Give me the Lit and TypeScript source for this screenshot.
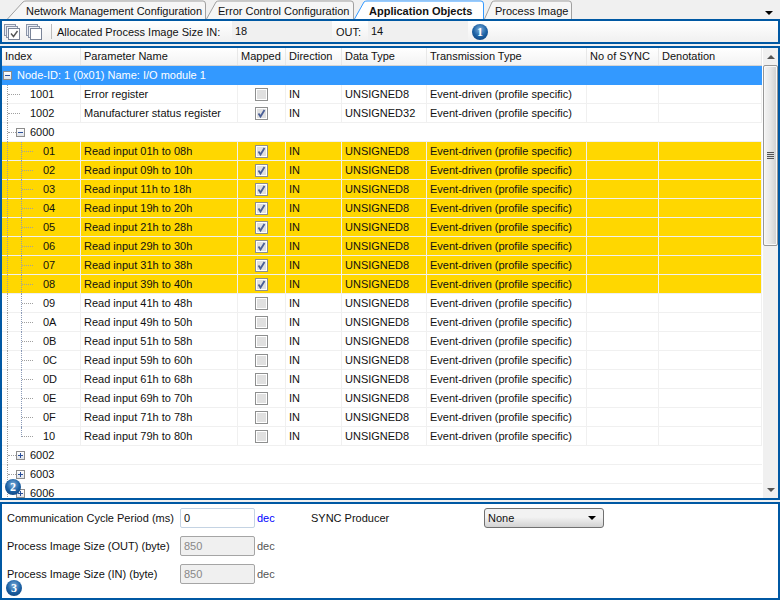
import { LitElement, html, css, svg, nothing } from 'lit';
import { customElement } from 'lit/decorators.js';

const tabs = [
  { label: 'Network Management Configuration', width: 200, slant: 16, pad: 19 },
  { label: 'Error Control Configuration', width: 149, slant: 10, pad: 12 },
  { label: 'Application Objects', width: 131, slant: 10, pad: 15, active: true },
  { label: 'Process Image', width: 89, slant: 8, pad: 11 },
];

const hex = (n: number) => n.toString(16).toUpperCase().padStart(2, '0');

const subRows = Array.from({ length: 16 }, (_, i) => ({
  index: hex(i + 1),
  name: `Read input ${hex(i * 8 + 1)}h to ${hex(i * 8 + 8)}h`,
  mapped: i < 8,
  last: i === 15,
}));

const checkbox = (on: boolean) => html`
  <svg class="check" width="13" height="13" viewBox="0 0 13 13">
    <rect x=".5" y=".5" width="12" height="12" fill="#fff" stroke="#8e8f8f" />
    <rect x="2" y="2" width="9" height="9" fill="#e0e0e0" />
    ${on ? svg`<path d="M3.5 6.5 L5.5 9.5 L9.5 3" fill="none" stroke="#4a5f97" stroke-width="1.8" />` : nothing}
  </svg>
`;

const stack = (on: boolean) => html`
  <svg width="16" height="16" viewBox="0 0 16 16">
    <rect x=".5" y=".5" width="11" height="11" fill="#e8ecf4" stroke="#8a94a8" />
    <rect x="2.5" y="2.5" width="11" height="11" fill="#eef1f6" stroke="#8a94a8" />
    <rect x="4.5" y="4.5" width="11" height="11" fill="#fff" stroke="#7a8498" />
    ${on ? svg`<path d="M7 9.5 L9.5 12.5 L13.5 7" fill="none" stroke="#555" stroke-width="1.4" />` : nothing}
  </svg>
`;

@customElement('app-root')
export class AppRoot extends LitElement {
  static styles = css`
    :host {
      display: flex;
      flex-direction: column;
      width: 780px;
      height: 600px;
      overflow: hidden;
      background: #f0f0f0;
      font-family: 'Liberation Sans', Arial, sans-serif;
      font-size: 11px;
      color: #111;
    }

    .tabs {
      display: flex;
      align-items: flex-end;
      height: 19px;
      padding-left: 7px;
      flex: none;
    }
    .tab {
      position: relative;
      height: 19px;
      line-height: 22px;
      white-space: nowrap;
      box-sizing: border-box;
      margin-right: -1px;
    }
    .tab svg {
      position: absolute;
      left: 0;
      top: 0;
    }
    .tab span {
      position: relative;
    }
    .tab.active {
      font-weight: bold;
    }
    .more {
      margin-left: auto;
      margin-right: 7px;
      margin-bottom: 4px;
      border-left: 4px solid transparent;
      border-right: 4px solid transparent;
      border-top: 4px solid #000;
    }

    .toolbar {
      display: flex;
      align-items: center;
      height: 25px;
      box-sizing: border-box;
      flex: none;
      border: 2px solid #0058a3;
      background: linear-gradient(#fff, #f0f0f0);
      padding-left: 2px;
    }
    .toolbar svg {
      flex: none;
    }
    .toolbar .second {
      margin-left: 6px;
      height: 16px;
    }
    .sep {
      width: 1px;
      height: 15px;
      background: #bbb;
      margin: 0 5px 0 9px;
    }
    .value {
      width: 100px;
      height: 21px;
      line-height: 21px;
      background: #f0f0f0;
      padding-left: 3px;
      box-sizing: border-box;
    }
    .alloc {
      width: 175px;
      white-space: nowrap;
    }
    .out {
      width: 36px;
      padding-left: 4px;
      box-sizing: border-box;
    }

    .badge {
      width: 16px;
      height: 16px;
      border-radius: 50%;
      flex: none;
      background: radial-gradient(circle at 50% 35%, #7fb0dc, #1d62a5 50%, #0b3a72);
      color: #fff;
      font-weight: bold;
      font-size: 12px;
      line-height: 16px;
      text-align: center;
      font-family: 'Liberation Serif', serif;
    }
    .toolbar .badge {
      margin-left: 4px;
    }

    .grid {
      position: relative;
      margin-top: 2px;
      height: 454px;
      flex: none;
      box-sizing: border-box;
      border: 2px solid #0058a3;
      background: #fff;
      display: flex;
      overflow: hidden;
    }
    .table {
      width: 761px;
      flex: none;
      height: 450px;
      overflow: hidden;
    }
    .row {
      display: grid;
      grid-template-columns: 79px 157px 48px 56px 85px 160px 72px 103px;
      width: 760px;
      height: 19px;
      box-sizing: border-box;
      border-bottom: 1px solid #f0f0f0;
      line-height: 18px;
      white-space: nowrap;
    }
    .row > div {
      border-right: 1px solid #f0f0f0;
      padding-left: 3px;
      box-sizing: border-box;
      height: 18px;
    }
    .head {
      height: 18px;
      line-height: 17px;
      background: linear-gradient(#fff, #f3f3f3);
      border-bottom: 1px solid #d5d5d5;
    }
    .head > div {
      height: 17px;
      border-right: 1px solid #e8e8e8;
    }
    .hot {
      background: #ffd700;
    }
    .node {
      display: flex;
      align-items: center;
      gap: 5px;
      height: 19px;
      width: 760px;
      padding: 0 0 1px 1px;
      box-sizing: border-box;
      background: #3399ff;
      color: #fff;
    }
    .group {
      display: flex;
      width: 760px;
      height: 19px;
      box-sizing: border-box;
      border-bottom: 1px solid #f0f0f0;
      line-height: 18px;
    }
    .row > .index {
      display: flex;
      padding-left: 0;
    }
    .trunk {
      width: 12px;
      margin-left: 5px;
      flex: none;
      border-left: 1px dotted #a0a0a0;
      height: 19px;
    }
    .tick {
      display: block;
      height: 9px;
      border-bottom: 1px dotted #a0a0a0;
    }
    .branch {
      width: 11px;
      margin-left: 1px;
      flex: none;
      border-left: 1px dotted #8a9ab8;
      height: 19px;
    }
    .branch.end {
      height: 10px;
    }
    .code {
      padding-left: 10px;
    }
    .code.top {
      padding-left: 10px;
    }
    .toggle {
      width: 9px;
      height: 9px;
      flex: none;
      position: relative;
      box-sizing: border-box;
      border: 1px solid #8c8c8c;
      background: linear-gradient(#fff, #dfe3ea);
    }
    .toggle::before {
      content: '';
      position: absolute;
      left: 1px;
      right: 1px;
      top: 3px;
      height: 1px;
      background: #2a4f9a;
    }
    .toggle.plus::after {
      content: '';
      position: absolute;
      top: 1px;
      bottom: 1px;
      left: 3px;
      width: 1px;
      background: #2a4f9a;
    }
    .group .trunk {
      width: 8px;
    }
    .group .toggle {
      margin: 5px 5px 0 0;
    }
    .mapped {
      display: flex;
      justify-content: center;
      align-items: center;
    }
    .mapped .check {
      margin-left: -3px;
    }

    .scroll {
      width: 15px;
      flex: none;
      height: 450px;
      display: flex;
      flex-direction: column;
      background: #f0f0f0;
      align-items: center;
    }
    .arrow {
      height: 17px;
      width: 15px;
      flex: none;
      display: flex;
      align-items: center;
      justify-content: center;
    }
    .arrow i {
      border-left: 4px solid transparent;
      border-right: 4px solid transparent;
    }
    .arrow.up i {
      border-bottom: 4px solid #555;
    }
    .arrow.down i {
      border-top: 4px solid #555;
    }
    .thumb {
      width: 15px;
      height: 181px;
      flex: none;
      box-sizing: border-box;
      border: 1px solid #979797;
      border-radius: 2px;
      background: linear-gradient(90deg, #f4f4f4, #e6e6e6 50%, #cfcfcf);
      display: flex;
      align-items: center;
      justify-content: center;
      box-shadow: inset 0 0 0 1px #f8f8f8;
    }
    .grip {
      width: 7px;
      height: 7px;
      background: repeating-linear-gradient(#555 0 1px, #ddd 1px 2px);
    }
    .fill {
      flex: 1;
    }
    .grid .badge {
      position: absolute;
      left: 3px;
      top: 431px;
    }

    .form {
      position: relative;
      margin-top: 2px;
      flex: 1;
      box-sizing: border-box;
      border: 2px solid #0058a3;
      background: #fff;
      padding: 4px 0 0 5px;
      display: grid;
      grid-template-columns: 173px 75px 56px 173px 120px;
      grid-auto-rows: 20px;
      row-gap: 8px;
      align-items: center;
      white-space: nowrap;
    }
    input {
      width: 75px;
      height: 20px;
      box-sizing: border-box;
      font: inherit;
      padding: 0 3px;
      border: 1px solid #c4d3e3;
      border-radius: 2px;
      outline: none;
      color: #111;
      background: #fff;
    }
    input:disabled {
      background: #f0f0f0;
      border-color: #a5a5a5;
      color: #888;
    }
    .unit {
      padding-left: 2px;
      color: #555;
    }
    .unit.live {
      color: #0000ff;
    }
    .select {
      width: 120px;
      height: 20px;
      box-sizing: border-box;
      border: 1px solid #707070;
      border-radius: 3px;
      background: linear-gradient(#f2f2f2 45%, #d2d2d2);
      display: flex;
      align-items: center;
      justify-content: space-between;
      padding: 0 7px 0 3px;
    }
    .select i {
      border-left: 4px solid transparent;
      border-right: 4px solid transparent;
      border-top: 4px solid #000;
    }
    .form .badge {
      position: absolute;
      left: 4px;
      top: 76px;
    }
  `;

  private renderTab(t: (typeof tabs)[number]) {
    const w = t.width;
    const d = `M.5 19 L${t.slant} 2 Q${t.slant + 1} 1 ${t.slant + 3} 1 H${w - 4} Q${w - 1.5} 1 ${w - 1.5} 4 V19`;
    return html`
      <div class="tab ${t.active ? 'active' : ''}" style="width:${w}px;padding-left:${t.pad}px">
        <svg width=${w} height="19" viewBox="0 0 ${w} 19">
          <path d=${d} fill=${t.active ? '#fff' : '#f6f6f6'} stroke=${t.active ? '#3399ff' : '#a0a0a0'} />
        </svg>
        <span>${t.label}</span>
      </div>
    `;
  }

  private renderCells(name: string, mapped: boolean, type: string) {
    return html`
      <div>${name}</div>
      <div class="mapped">${checkbox(mapped)}</div>
      <div>IN</div>
      <div>${type}</div>
      <div>Event-driven (profile specific)</div>
      <div></div>
      <div></div>
    `;
  }

  private renderGroup(code: string, open: boolean) {
    return html`
      <div class="group">
        <div class="trunk"><span class="tick"></span></div>
        <span class="toggle ${open ? '' : 'plus'}"></span>
        <span>${code}</span>
      </div>
    `;
  }

  render() {
    return html`
      <div class="tabs">
        ${tabs.map((t) => this.renderTab(t))}
        <div class="more"></div>
      </div>

      <div class="toolbar">
        ${stack(true)}
        <span class="second">${stack(false)}</span>
        <div class="sep"></div>
        <div class="alloc">Allocated Process Image Size IN:</div>
        <div class="value">18</div>
        <div class="out">OUT:</div>
        <div class="value">14</div>
        <div class="badge">1</div>
      </div>

      <div class="grid">
        <div class="table">
          <div class="row head">
            <div>Index</div>
            <div>Parameter Name</div>
            <div>Mapped</div>
            <div>Direction</div>
            <div>Data Type</div>
            <div>Transmission Type</div>
            <div>No of SYNC</div>
            <div>Denotation</div>
          </div>
          <div class="node">
            <span class="toggle"></span>
            <span>Node-ID: 1 (0x01) Name: I/O module 1</span>
          </div>
          ${[
            ['1001', 'Error register', false, 'UNSIGNED8'],
            ['1002', 'Manufacturer status register', true, 'UNSIGNED32'],
          ].map(
            ([code, name, on, type]) => html`
              <div class="row">
                <div class="index">
                  <div class="trunk"><span class="tick"></span></div>
                  <span class="code top">${code}</span>
                </div>
                ${this.renderCells(name as string, on as boolean, type as string)}
              </div>
            `,
          )}
          ${this.renderGroup('6000', true)}
          ${subRows.map(
            (r) => html`
              <div class="row ${r.mapped ? 'hot' : ''}">
                <div class="index">
                  <div class="trunk"></div>
                  <div class="branch ${r.last ? 'end' : ''}"><span class="tick"></span></div>
                  <span class="code">${r.index}</span>
                </div>
                ${this.renderCells(r.name, r.mapped, 'UNSIGNED8')}
              </div>
            `,
          )}
          ${this.renderGroup('6002', false)} ${this.renderGroup('6003', false)} ${this.renderGroup('6006', false)}
        </div>
        <div class="scroll">
          <div class="arrow up"><i></i></div>
          <div class="thumb"><div class="grip"></div></div>
          <div class="fill"></div>
          <div class="arrow down"><i></i></div>
        </div>
        <div class="badge">2</div>
      </div>

      <div class="form">
        <div>Communication Cycle Period (ms)</div>
        <input value="0" />
        <div class="unit live">dec</div>
        <div>SYNC Producer</div>
        <div class="select"><span>None</span><i></i></div>

        <div>Process Image Size (OUT) (byte)</div>
        <input value="850" disabled />
        <div class="unit">dec</div>
        <div></div>
        <div></div>

        <div>Process Image Size (IN) (byte)</div>
        <input value="850" disabled />
        <div class="unit">dec</div>
        <div class="badge">3</div>
      </div>
    `;
  }
}

declare global {
  interface HTMLElementTagNameMap {
    'app-root': AppRoot;
  }
}
